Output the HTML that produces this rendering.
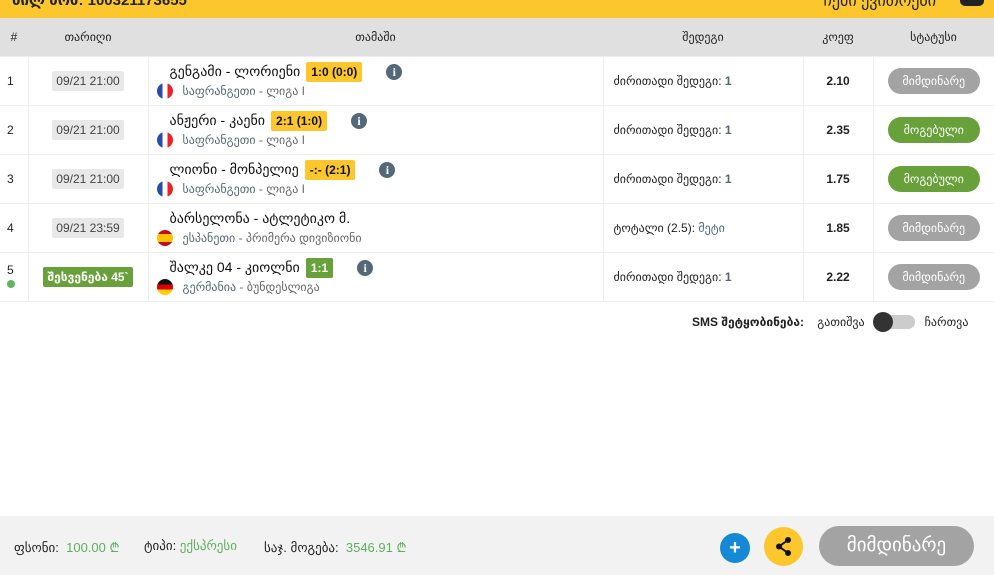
<!DOCTYPE html>
<html><head><meta charset="utf-8"><style>
*{margin:0;padding:0;box-sizing:border-box}
body{width:994px;height:575px;overflow:hidden;background:#fff;font-family:"Liberation Sans","DejaVu Sans",sans-serif;font-size:12px;color:#222;position:relative}
.top{position:absolute;left:0;top:0;width:994px;height:18px;background:#fcc72c}
.top .l{position:absolute;left:12px;top:-9px;font-size:15px;font-weight:bold}
.top .r{position:absolute;right:58px;top:-9px;font-size:16px}
.top .b{position:absolute;left:960px;top:-10px;width:24px;height:16px;background:#222;border-radius:5px}
table{position:absolute;top:18px;left:0;width:994px;border-collapse:collapse}
th{background:#e0e0e0;height:38px;font-weight:normal;font-size:12px;color:#222}
td{height:49px;border:1px solid #eee;border-left:none;vertical-align:middle;font-size:12px}
td:last-child{border-right:none}
.c{text-align:center}
.date{display:inline-block;background:#e8e8e8;color:#444;padding:3px 4px;border-radius:2px;font-size:12px}
.game{padding-left:8px}
.t{font-size:14px;color:#111;padding-left:13px;display:flex;align-items:center;height:21px}
.sc{background:#fcc72c;padding:3px 5px;margin-left:6px;font-size:12px;font-weight:bold;border-radius:2px}
.scg{background:#68a13a;color:#fff}
.info{display:inline-block;width:16px;height:16px;border-radius:50%;background:#536878;color:#fff;font-weight:bold;font-size:12px;text-align:center;line-height:16px;font-family:"Liberation Serif",serif;margin-left:24px}
.lg{display:flex;align-items:center;color:#536878;font-size:12px;height:18px}
.lg span.g{color:#666}
.flag{width:16px;height:16px;border-radius:50%;margin-right:10px;overflow:hidden;flex:none}
.fr{background:linear-gradient(90deg,#2a4bab 33%,#fff 33%,#fff 66%,#e22 66%)}
.es{background:linear-gradient(#c60b1e 25%,#fcc400 25%,#fcc400 75%,#c60b1e 75%)}
.de{background:linear-gradient(#111 33%,#d00 33%,#d00 66%,#fc0 66%)}
.res{padding-left:10px}
.res b{color:#536878}
.st{display:inline-block;width:92px;height:26px;line-height:26px;border-radius:13px;color:#fff;font-size:12px;text-align:center}
.gr{background:#a3a3a3}.gn{background:#68a13a}
.sms{position:absolute;top:315px;left:692px;font-size:12px;display:flex;align-items:center}
.tog{width:40px;height:14px;background:#ccc;border-radius:7px;position:relative;margin:0 10px}
.tog:before{content:"";position:absolute;left:-2px;top:-3px;width:20px;height:20px;border-radius:50%;background:#333}
.foot{position:absolute;left:0;top:516px;width:994px;height:59px;background:#f2f2f2}
.ft{position:absolute;top:22px;font-size:13px;color:#222;font-family:"Liberation Sans Narrow","Liberation Sans",sans-serif}
.ft b{color:#5db05d;font-weight:normal}
.plus{position:absolute;left:720px;top:17px;width:30px;height:30px;border-radius:50%;background:#1588d6;color:#fff;text-align:center;line-height:30px;font-size:20px;font-weight:bold}
.share{position:absolute;left:764px;top:11px;width:39px;height:39px;border-radius:50%;background:#fcc72c}
.big{position:absolute;left:819px;top:10px;width:155px;height:40px;border-radius:20px;background:#a3a3a3;color:#fff;font-size:19px;text-align:center;line-height:40px}
</style></head><body>
<div class="top"><div class="l">ბილ ნომ: 100321173655</div><div class="r">ჩემი ქვითრები</div><div class="b"></div></div>
<table>
<tr><th style="width:28px">#</th><th style="width:120px">თარიღი</th><th style="width:455px">თამაში</th><th style="width:200px">შედეგი</th><th style="width:70px">კოეფ</th><th>სტატუსი</th></tr>
<tr><td class="c" style="text-align:left;padding-left:7px">1</td><td class="c"><span class="date">09/21 21:00</span></td><td class="game"><div class="t">გენგამი - ლორიენი <span class="sc">1:0 (0:0)</span><span class="info">i</span></div><div class="lg"><div class="flag fr"></div>საფრანგეთი <span class="g">&nbsp;- ლიგა I</span></div></td><td class="res">ძირითადი შედეგი: <b>1</b></td><td class="c"><b style="font-weight:600">2.10</b></td><td class="c"><span class="st gr">მიმდინარე</span></td></tr>
<tr><td style="padding-left:7px">2</td><td class="c"><span class="date">09/21 21:00</span></td><td class="game"><div class="t">ანჟერი - კაენი <span class="sc">2:1 (1:0)</span><span class="info">i</span></div><div class="lg"><div class="flag fr"></div>საფრანგეთი <span class="g">&nbsp;- ლიგა I</span></div></td><td class="res">ძირითადი შედეგი: <b>1</b></td><td class="c"><b style="font-weight:600">2.35</b></td><td class="c"><span class="st gn">მოგებული</span></td></tr>
<tr><td style="padding-left:7px">3</td><td class="c"><span class="date">09/21 21:00</span></td><td class="game"><div class="t">ლიონი - მონპელიე <span class="sc">-:- (2:1)</span><span class="info">i</span></div><div class="lg"><div class="flag fr"></div>საფრანგეთი <span class="g">&nbsp;- ლიგა I</span></div></td><td class="res">ძირითადი შედეგი: <b>1</b></td><td class="c"><b style="font-weight:600">1.75</b></td><td class="c"><span class="st gn">მოგებული</span></td></tr>
<tr><td style="padding-left:7px">4</td><td class="c"><span class="date">09/21 23:59</span></td><td class="game"><div class="t">ბარსელონა - ატლეტიკო მ.</div><div class="lg"><div class="flag es"></div>ესპანეთი <span class="g">&nbsp;- პრიმერა დივიზიონი</span></div></td><td class="res">ტოტალი (2.5): <b style="font-weight:normal">მეტი</b></td><td class="c"><b style="font-weight:600">1.85</b></td><td class="c"><span class="st gr">მიმდინარე</span></td></tr>
<tr><td style="padding-left:7px;line-height:14px">5<br><span style="display:inline-block;width:8px;height:8px;border-radius:50%;background:#5cb85c"></span></td><td class="c"><span class="date" style="background:#68a13a;color:#fff;font-weight:bold">შესვენება 45`</span></td><td class="game"><div class="t">შალკე 04 - კიოლნი <span class="sc scg">1:1</span><span class="info">i</span></div><div class="lg"><div class="flag de"></div>გერმანია <span class="g">&nbsp;- ბუნდესლიგა</span></div></td><td class="res">ძირითადი შედეგი: <b>1</b></td><td class="c"><b style="font-weight:600">2.22</b></td><td class="c"><span class="st gr">მიმდინარე</span></td></tr>
</table>
<div class="sms"><b style="font-weight:600">SMS შეტყობინება:</b>&nbsp;&nbsp;&nbsp;&nbsp;გათიშვა<div class="tog"></div>ჩართვა</div>
<div class="foot">
<div class="ft" style="left:14px">ფსონი: &nbsp;<b>100.00 ₾</b></div>
<div class="ft" style="left:144px">ტიპი: <b>ექსპრესი</b></div>
<div class="ft" style="left:264px">საჯ. მოგება: &nbsp;<b>3546.91 ₾</b></div>
<div class="plus">+</div>
<div class="share"><svg width="39" height="39" viewBox="0 0 39 39"><g fill="#111"><circle cx="24" cy="13" r="3"/><circle cx="15" cy="19.5" r="3"/><circle cx="24" cy="26" r="3"/></g><path d="M24 13L15 19.5L24 26" stroke="#111" stroke-width="2" fill="none"/></svg></div>
<div class="big">მიმდინარე</div>
</div>
</body></html>
